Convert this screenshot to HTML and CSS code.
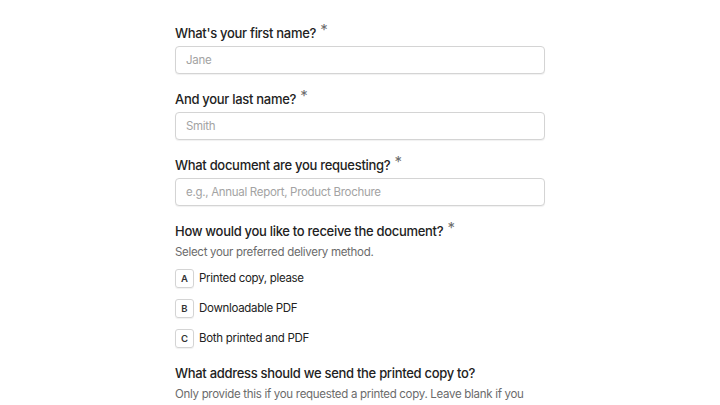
FILE: index.html
```html
<!DOCTYPE html>
<html lang="en">
  <head>
    <meta charset="UTF-8" />
    <meta name="viewport" content="width=device-width, initial-scale=1.0" />
    <title>Document Request</title>
    <link rel="stylesheet" href="styles.css">
  </head>
  <body>
    <form class="request-form">
      <div class="field">
        <label class="field-label" for="firstName">What's your first name? <span class="required">*</span></label>
        <input class="text-input" id="firstName" type="text" placeholder="Jane" />
      </div>

      <div class="field">
        <label class="field-label" for="lastName">And your last name? <span class="required">*</span></label>
        <input class="text-input" id="lastName" type="text" placeholder="Smith" />
      </div>

      <div class="field">
        <label class="field-label" for="docName">What document are you requesting? <span class="required">*</span></label>
        <input class="text-input" id="docName" type="text" placeholder="e.g., Annual Report, Product Brochure" />
      </div>

      <div class="field">
        <div class="field-label">How would you like to receive the document? <span class="required">*</span></div>
        <div class="field-help">Select your preferred delivery method.</div>
        <div class="choices">
          <div class="choice"><span class="choice-key">A</span>Printed copy, please</div>
          <div class="choice"><span class="choice-key">B</span>Downloadable PDF</div>
          <div class="choice"><span class="choice-key">C</span>Both printed and PDF</div>
        </div>
      </div>

      <div class="field">
        <div class="field-label">What address should we send the printed copy to?</div>
        <div class="field-help">Only provide this if you requested a printed copy. Leave blank if you chose PDF only.</div>
      </div>
    </form>
  </body>
</html>
```

FILE: styles.css
```css
body {
  font-family: "Inter", "Liberation Sans", sans-serif;
  margin: 0;
  background-color: #fff;
  color: #1f1f1f;
}
.request-form {
  width: 370px;
  margin: 0 auto;
  padding: 23px 0 0 0;
  display: flex;
  flex-direction: column;
  gap: 15px;
}
.field {
  display: flex;
  flex-direction: column;
}
.field-label {
  font-size: 13px;
  font-weight: 500;
  letter-spacing: -0.3px;
  line-height: 20px;
  color: #222;
  margin-bottom: 3px;
}
.required {
  color: #6e6e6e;
  font-weight: 400;
  font-size: 15px;
  position: relative;
  top: -3px;
  margin-left: 1px;
}
.field-help {
  font-size: 11.5px;
  letter-spacing: -0.3px;
  line-height: 20px;
  color: #6b6b6b;
  margin-top: -2px;
}
.text-input {
  box-sizing: border-box;
  height: 28px;
  width: 100%;
  padding: 0 10px;
  border: 1px solid #d4d4d4;
  border-radius: 4px;
  box-shadow: 0 1px 1px rgba(0, 0, 0, 0.06);
  font-family: inherit;
  font-size: 11.5px;
  letter-spacing: -0.3px;
  color: #222;
}
.text-input::placeholder {
  color: #a3a3a3;
}
.choices {
  display: flex;
  flex-direction: column;
  gap: 10px;
  margin-top: 6px;
}
.choice {
  display: flex;
  align-items: center;
  gap: 5px;
  height: 20px;
  font-size: 11.5px;
  letter-spacing: -0.3px;
  color: #222;
}
.choice-key {
  box-sizing: border-box;
  width: 19px;
  height: 19px;
  display: flex;
  align-items: center;
  justify-content: center;
  border: 1px solid #d4d4d4;
  border-radius: 3px;
  box-shadow: 0 1px 1px rgba(0, 0, 0, 0.06);
  font-size: 9.5px;
  font-weight: 600;
  letter-spacing: 0;
  color: #333;
}
```
